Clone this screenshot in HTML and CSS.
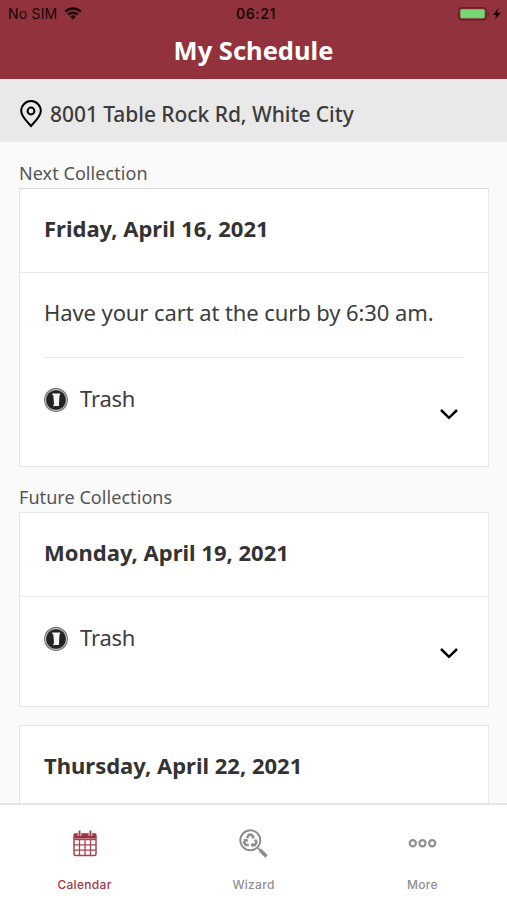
FILE: index.html
```html
<!DOCTYPE html>
<html lang="en">
<head>
<meta charset="utf-8">
<title>My Schedule</title>
<link rel="stylesheet" href="styles.css">
</head>
<body>
<svg class="defs" aria-hidden="true">
  <symbol id="trash" viewBox="0 0 24 24">
    <circle cx="12" cy="12" r="11.9" fill="#666"/>
    <circle cx="12" cy="12" r="10.7" fill="none" stroke="#c4c4c4" stroke-width="1"/>
    <circle cx="12" cy="12" r="9.6" fill="#222"/>
    <path d="M8.300 5.600h7.800v1.600h-.6L14.900 18H10.200L9.300 7.200h-1z" fill="#f4f4f4"/>
    <circle cx="10.200" cy="17.300" r="1.1" fill="#ddd"/>
  </symbol>
  <symbol id="chevron" viewBox="0 0 20 12">
    <path d="M2 2l8 7.800L18 2" fill="none" stroke="#000" stroke-width="2.500"/>
  </symbol>
</svg>
<div class="app">
  <header class="header">
    <div class="status">
      <div class="carrier">
        <span>No SIM</span>
        <svg width="18" height="13" viewBox="0 0 18 13" fill="none" stroke="#1a0508" stroke-width="2.500">
          <path d="M1.300 4.700a11 11 0 0 1 15.400 0M4.100 7.700a7 7 0 0 1 9.800 0"/>
          <path d="M9 12.500L6.200 9.700a4 4 0 0 1 5.600 0z" fill="#1a0508" stroke="none"/>
        </svg>
      </div>
      <div class="clock">06:21</div>
      <div class="power">
        <svg width="44" height="14" viewBox="0 0 44 14">
          <rect x=".8" y=".8" width="27.400" height="12" rx="3" fill="none" stroke="#641f29" stroke-width="1.400"/>
          <rect x="2.300" y="2.300" width="24.400" height="9" rx="1.500" fill="#76d672"/>
          <path d="M29.700 5v3.800q1.600-.4 1.600-1.900T29.700 5z" fill="#641f29"/>
          <path d="M40.500 1.100L35 7.900h3.300l-1.300 4.900 5.700-7h-3.400z" fill="#140306"/>
        </svg>
      </div>
    </div>
    <h1 class="title">My Schedule</h1>
  </header>
  <div class="address">
    <svg width="22" height="28" viewBox="0 0 22 28" fill="none" stroke="#000" stroke-width="2">
      <path d="M11 26C7 21.500 1.200 16.300 1.200 10.900a9.800 9.800 0 0 1 19.600 0C20.800 16.300 15 21.500 11 26z"/>
      <circle cx="11" cy="11" r="3.400"/>
    </svg>
    <span>8001 Table Rock Rd, White City</span>
  </div>
  <main class="content">
    <h2 class="label">Next Collection</h2>
    <section class="card next">
      <h3 class="date">Friday, April 16, 2021</h3>
      <div class="body">
        <p class="note">Have your cart at the curb by 6:30 am.</p>
        <div class="item">
          <svg class="bin"><use href="#trash"/></svg>
          <span class="kind">Trash</span>
          <svg class="chevron"><use href="#chevron"/></svg>
        </div>
      </div>
    </section>
    <h2 class="label future">Future Collections</h2>
    <section class="card">
      <h3 class="date">Monday, April 19, 2021</h3>
      <div class="body">
        <div class="item">
          <svg class="bin"><use href="#trash"/></svg>
          <span class="kind">Trash</span>
          <svg class="chevron"><use href="#chevron"/></svg>
        </div>
      </div>
    </section>
    <section class="card later">
      <h3 class="date">Thursday, April 22, 2021</h3>
    </section>
  </main>
  <nav class="tabs">
    <a class="tab active">
      <svg width="30" height="30" viewBox="0 0 30 30">
        <rect x="4" y="4.500" width="22" height="5" fill="#9c3040"/>
        <rect x="4" y="5" width="22" height="21.500" rx="1.500" fill="none" stroke="#a64452" stroke-width="1.500"/>
        <path d="M4 10.500h22M4 15.800h22M4 21.200h22M9.500 10v16.500M15 10v16.500M20.500 10v16.500" stroke="#a64452" stroke-width="1.300"/>
        <path d="M9.500 3v4M20.500 3v4" stroke="#fff" stroke-width="3.600"/>
        <path d="M9.500 1.500v5.500M20.500 1.500v5.500" stroke="#a64452" stroke-width="2"/>
      </svg>
      <span>Calendar</span>
    </a>
    <a class="tab">
      <svg width="30" height="30" viewBox="0 0 30 30" fill="none" stroke="#8c8c8c">
        <circle cx="11.300" cy="11.300" r="10" stroke-width="1.900"/>
        <path d="M18 18l3 3" stroke-width="1.500"/>
        <path d="M20.800 20.800l6.700 6.700" stroke-width="3.600"/>
        <path d="M8 9l2-3.300h2.700l1.600 2.700M16.100 10.500l1.400 2.700-1.500 2.800h-3M9.800 16H6.700l-1.600-2.600 1.600-2.900" stroke-width="2.500"/>
        <path d="M15.400 6.100v3.500h-3.400zM14.100 13.300v5.400L11.400 16zM4.100 10.400l4.200-.9 1 3.700z" fill="#8c8c8c" stroke="none"/>
      </svg>
      <span>Wizard</span>
    </a>
    <a class="tab">
      <svg width="30" height="30" viewBox="0 0 30 30" fill="none" stroke="#909090" stroke-width="2.200">
        <circle cx="4.800" cy="14.300" r="3.100"/>
        <circle cx="14.500" cy="14.300" r="3.100"/>
        <circle cx="24.200" cy="14.300" r="3.100"/>
      </svg>
      <span>More</span>
    </a>
  </nav>
</div>
</body>
</html>
```
FILE: styles.css
```css
* { box-sizing: border-box; }
body {
  margin: 0;
  font-family: "Noto Sans", sans-serif;
  color: #333;
}
h1, h2, h3, p { margin: 0; }
.defs { display: none; }
.app {
  display: flex;
  flex-direction: column;
  height: 900px;
  overflow: hidden;
  background: #fafafa;
}
.header {
  flex: none;
  height: 79px;
  background: #92323d;
}
.status {
  display: grid;
  grid-template-columns: 1fr auto 1fr;
  align-items: center;
  height: 27px;
  padding: 0 5px 0 8px;
  font-family: Inter, sans-serif;
  font-size: 14px;
  color: #1a0508;
}
.carrier {
  display: flex;
  align-items: center;
  gap: 7px;
  letter-spacing: 0.2px;
}
.clock {
  padding-left: 2px;
  font-weight: 600;
  letter-spacing: 0.5px;
}
.power {
  display: flex;
  justify-content: flex-end;
}
.title {
  font-size: 25.5px;
  line-height: 46px;
  font-weight: 700;
  text-align: center;
  color: #fff;
}
.address {
  flex: none;
  display: flex;
  align-items: center;
  gap: 8px;
  height: 63px;
  padding: 6px 20px 0;
  background: #e9e9e9;
  font-size: 21px;
  font-weight: 500;
  letter-spacing: -0.05px;
  color: #3c3c3c;
}
.content {
  flex: 1;
  min-height: 0;
  overflow: hidden;
  padding: 18px 18px 0 19px;
}
.label {
  height: 28px;
  font-size: 18px;
  line-height: 27px;
  font-weight: 400;
  letter-spacing: 0.06px;
  color: #555;
}
.card {
  height: 195px;
  border: 1px solid #e6e6e6;
  background: #fff;
}
.next {
  height: 279px;
  border-top-color: #dadada;
}
.future { margin-top: 17px; }
.later { margin-top: 18px; }
.date {
  height: 84px;
  padding: 0 24px;
  border-bottom: 1px solid #e9e9e9;
  font-size: 22px;
  line-height: 78px;
  font-weight: 700;
}
.body { padding: 0 24px; }
.note {
  height: 85px;
  border-bottom: 1px solid #e9e9e9;
  font-size: 22px;
  line-height: 79px;
  letter-spacing: -0.09px;
  white-space: nowrap;
  color: #3c3c3c;
}
.item {
  display: flex;
  align-items: center;
  height: 84px;
  color: #3c3c3c;
}
.bin {
  width: 24px;
  height: 24px;
  margin-right: 12px;
}
.kind {
  font-size: 22px;
  line-height: 30px;
  margin-top: -5px;
  letter-spacing: -0.2px;
}
.chevron {
  width: 20px;
  height: 12px;
  margin: 27px 5px 0 auto;
}
.tabs {
  flex: none;
  display: grid;
  grid-template-columns: repeat(3, 1fr);
  height: 97px;
  border-top: 2px solid #e6e6e6;
  background: #fff;
}
.tab {
  display: flex;
  flex-direction: column;
  align-items: center;
  padding-top: 24px;
  font-family: Inter, sans-serif;
  font-size: 12px;
  line-height: 16px;
  font-weight: 500;
  letter-spacing: 0.3px;
  color: #8e8e8e;
}
.tab span { margin-top: 18px; }
.active { color: #a03848; }
```
